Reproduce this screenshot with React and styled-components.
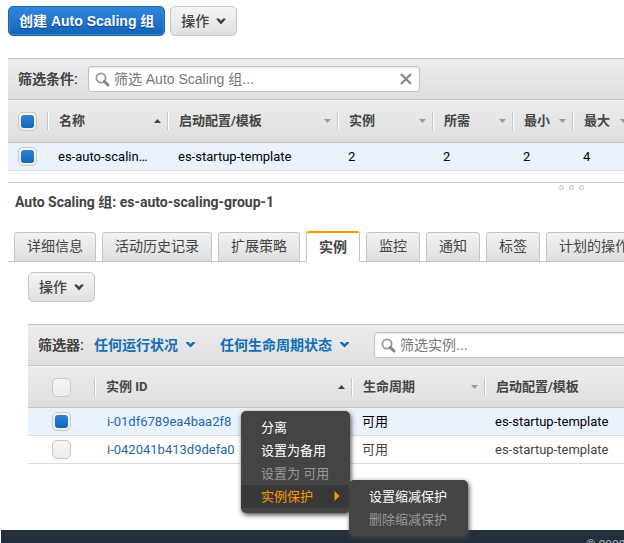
import React, { useState } from "react";
import styled, { createGlobalStyle, css } from "styled-components";

const sans = '"Liberation Sans", "Noto Sans CJK SC", sans-serif';
const roboto = 'Roboto, "Noto Sans CJK SC", sans-serif';

const GlobalStyle = createGlobalStyle`
  *, *::before, *::after { box-sizing: border-box; }
  html { overflow: hidden; }
  body { margin: 0; background: #fff; color: #444; font: 14px/20px ${sans}; }
  button, input, select { font: inherit; color: inherit; margin: 0; }
`;

const Page = styled.div`
  display: flex;
  flex-direction: column;
  height: 100vh;
  overflow: hidden;
`;

const Main = styled.main`
  flex: 1 0 auto;
  padding: 6px 0 0 8px;
`;

const Toolbar = styled.div`
  display: flex;
  gap: 5px;
`;

const Button = styled.button`
  display: inline-flex;
  align-items: center;
  gap: 7px;
  height: 30px;
  padding: 0 10px;
  border: 1px solid #c6c6c6;
  border-radius: 5px;
  background: linear-gradient(#f5f5f5, #e0e0e0);
  color: #444;
  font-weight: 500;
  white-space: nowrap;
  ${(p) =>
    p.$primary &&
    css`
      border-color: #1a63b0;
      background: linear-gradient(#2f88dc, #1263b8);
      box-shadow: inset 0 0 0 1px #3583d0;
      color: #fff;
      font-weight: 700;
      text-shadow: 0 1px 1px #0b4480;
    `}
`;

const Panel = styled.section`
  position: relative;
  margin: ${(p) => (p.$nested ? "22px 0 0 20px" : "22px 0 0")};
`;

const FilterBar = styled.div`
  display: flex;
  align-items: center;
  gap: ${(p) => p.$gap}px;
  height: 42px;
  padding: 0 10px;
  border: solid #c4c4c4;
  border-width: 1px 0;
  background: linear-gradient(#ededed, #dedede);
  white-space: nowrap;
`;

const FilterGroup = styled.div`
  display: flex;
  align-items: center;
  gap: 10px;
`;

const FilterLabel = styled.label`
  font-weight: 500;
  text-shadow: 0 0 0 #444;
`;

const SelectBox = styled.span`
  display: inline-flex;
  align-items: center;
  gap: 8px;
`;

const FilterSelect = styled.select`
  appearance: none;
  padding: 0;
  border: 0;
  background: transparent;
  color: #146eb4;
  font-weight: 700;
`;

const SearchBox = styled.div`
  display: flex;
  align-items: center;
  flex: 0 0 auto;
  gap: 4px;
  width: 332px;
  height: 26px;
  padding: 0 7px 0 6px;
  border: 1px solid #c4c4c4;
  border-radius: 3px;
  background: #fff;
  box-shadow: inset 0 1px 2px #e4e4e4;
`;

const SearchInput = styled.input`
  flex: 1;
  min-width: 0;
  padding: 0;
  border: 0;
  outline: 0;
  background: transparent;
  &::placeholder { color: #777; opacity: 1; }
`;

const ClearButton = styled.button`
  display: flex;
  padding: 0;
  border: 0;
  background: none;
`;

const Table = styled.table`
  width: 100%;
  min-width: 625px;
  table-layout: fixed;
  border-collapse: separate;
  border-spacing: 0;
  font: 13px/20px ${roboto};
`;

const Col = styled.col`
  width: ${(p) => (p.$width ? `${p.$width}px` : "auto")};
`;

const HeadRow = styled.tr`
  height: ${(p) => (p.$compact ? 42 : 43)}px;
  background: linear-gradient(#ececec, #dedede);
`;

const Th = styled.th`
  padding: 0;
  border-bottom: 1px solid #c4c4c4;
  box-shadow: inset 0 1px #f4f4f4;
  text-align: left;
`;

const SortButton = styled.button`
  display: flex;
  align-items: center;
  justify-content: space-between;
  width: 100%;
  height: 18px;
  padding: 0 6px 0 11px;
  border: 0;
  border-left: 1px solid #c4c4c4;
  background: none;
  box-shadow: inset 1px 0 #fff;
  color: #444;
  font-weight: 700;
  white-space: nowrap;
`;

const Tr = styled.tr`
  background: ${(p) => (p.$selected ? "#eaf2fe" : "#fff")};
  color: ${(p) => (p.$selected ? "#000" : "#444")};
`;

const Td = styled.td`
  height: 28px;
  padding: 0 14px 0 11px;
  border-bottom: 1px solid #dcdcdc;
  overflow: hidden;
  white-space: nowrap;
  text-overflow: ellipsis;
`;

const IdCell = styled(Td)`
  padding-left: 13px;
`;

const CheckCell = styled.td`
  height: 28px;
  padding: 0;
  border-bottom: 1px solid #dcdcdc;
  text-align: center;
  line-height: 16px;
`;

const CheckHead = styled(Th)`
  text-align: center;
`;

const Checkbox = styled.input`
  appearance: none;
  display: inline-grid;
  place-content: center;
  width: 19px;
  height: 19px;
  border: 1px solid #c8c8c8;
  border-radius: 5px;
  background: linear-gradient(#f6f6f6, #ececec);
  vertical-align: middle;
  &:checked::before {
    content: "";
    width: 13px;
    height: 13px;
    border-radius: 3px;
    background: linear-gradient(#2e84d8, #1465ba);
  }
`;

const InstanceLink = styled.a`
  color: #2467a8;
  text-decoration: none;
`;

const Splitter = styled.div`
  display: flex;
  justify-content: flex-end;
  gap: 5px;
  height: 10px;
  margin-top: 11px;
  padding: 2px 40px 0 0;
  border-top: 1px solid #c8c8c8;
`;

const Grip = styled.span`
  width: 5px;
  height: 5px;
  border: 1px solid #c0c0c0;
  border-radius: 50%;
  background: #f4f4f4;
`;

const Title = styled.h2`
  margin: 0 0 19px 7px;
  font: 700 14px/20px ${roboto};
  white-space: nowrap;
`;

const Tabs = styled.div`
  display: flex;
  align-items: flex-end;
  gap: 6px;
  height: 31px;
  padding-left: 6px;
  background: linear-gradient(#c4c4c4, #c4c4c4) bottom / 100% 1px no-repeat;
`;

const Tab = styled.button`
  flex: none;
  height: 30px;
  padding: 0 12px 2px;
  border: 1px solid #c4c4c4;
  border-radius: 3px 3px 0 0;
  background: linear-gradient(#f3f3f3, #dedede);
  ${(p) =>
    p.$active &&
    css`
      height: 31px;
      border-top: 2px solid #ff9900;
      border-bottom: 0;
      background: #fff;
      font-weight: 700;
    `}
`;

const TabBody = styled.div`
  padding: 10px 0 0 20px;
`;

const Menu = styled.ul`
  position: absolute;
  z-index: 2;
  left: 213px;
  top: 87px;
  width: 109px;
  margin: 0;
  padding: 5px 0;
  border-radius: 5px;
  background: #444;
  box-shadow: 1px 2px 5px #444;
  list-style: none;
  font: 13px/23px ${roboto};
`;

const SubMenu = styled(Menu)`
  left: 108px;
  top: -5px;
  width: 119px;
`;

const MenuItem = styled.li`
  position: relative;
  background: ${(p) => (p.$open ? "#383838" : "transparent")};
`;

const MenuButton = styled.button`
  display: flex;
  align-items: center;
  justify-content: space-between;
  width: 100%;
  height: 23px;
  padding: 0 10px 1px 20px;
  border: 0;
  background: none;
  color: ${(p) => (p.$open ? "#ff9900" : "#fff")};
  white-space: nowrap;
  &:disabled { color: #999; }
`;

const Footer = styled.footer`
  height: 13px;
  flex: none;
  margin-left: 1px;
  padding: 7px 0 0 585px;
  background: #232f3e;
  color: #aab7b8;
  font: 12px/16px ${roboto};
  white-space: nowrap;
`;

const Chevron = () => (
  <svg width="10" height="7" viewBox="0 0 10 7" aria-hidden="true">
    <path d="M0.5 0.5H3L5 2.8L7 0.5H9.5V1.5L5 6.5L0.5 1.5Z" fill="#444" />
  </svg>
);

const SmallChevron = () => (
  <svg width="9" height="6" viewBox="0 0 9 6" aria-hidden="true">
    <path d="M0 0H2.5L4.5 2L6.5 0H9V1L4.5 5.5L0 1Z" fill="#146eb4" />
  </svg>
);

const SearchIcon = () => (
  <svg width="15" height="15" viewBox="0 0 15 15" aria-hidden="true">
    <circle cx="6" cy="6" r="4.6" fill="none" stroke="#999" strokeWidth="1.8" />
    <path d="M9.3 9.3L13 13" stroke="#888" strokeWidth="3" strokeLinecap="round" />
  </svg>
);

const ClearIcon = () => (
  <svg width="12" height="12" viewBox="0 0 12 12" aria-hidden="true">
    <path d="M1 1L11 11M11 1L1 11" stroke="#888" strokeWidth="2.2" />
  </svg>
);

const SortIcon = ({ up }) => (
  <svg width="7" height="4" viewBox="0 0 7 4" aria-hidden="true">
    <path d={up ? "M0 4L3.5 0L7 4Z" : "M0 0L3.5 4L7 0Z"} fill={up ? "#444" : "#999"} />
  </svg>
);

const SubArrow = () => (
  <svg width="6" height="10" viewBox="0 0 6 10" aria-hidden="true">
    <path d="M0.5 0L5.5 5L0.5 10Z" fill="#ff9900" />
  </svg>
);

const HeaderCell = ({ children, up }) => (
  <Th scope="col">
    <SortButton type="button">
      {children}
      <SortIcon up={up} />
    </SortButton>
  </Th>
);

const tabs = ["详细信息", "活动历史记录", "扩展策略", "实例", "监控", "通知", "标签", "计划的操作"];

const groupColumns = ["名称", "启动配置/模板", "实例", "所需", "最小", "最大"];

const instances = [
  { id: "i-01df6789ea4baa2f8", selected: true },
  { id: "i-042041b413d9defa0", selected: false },
];

export default function App() {
  const [tab, setTab] = useState("实例");
  return (
    <Page>
      <GlobalStyle />
      <Main>
        <Toolbar>
          <Button type="button" $primary>创建 Auto Scaling 组</Button>
          <Button type="button">操作<Chevron /></Button>
        </Toolbar>

        <Panel>
          <FilterBar $gap={10}>
            <FilterLabel htmlFor="group-filter">筛选条件:</FilterLabel>
            <SearchBox>
              <SearchIcon />
              <SearchInput id="group-filter" placeholder="筛选 Auto Scaling 组..." />
              <ClearButton type="button" aria-label="清除"><ClearIcon /></ClearButton>
            </SearchBox>
          </FilterBar>
          <Table>
            <colgroup>
              {[39, 120, 170, 95, 80, 60, 0].map((w, i) => <Col key={i} $width={w} />)}
            </colgroup>
            <thead>
              <HeadRow>
                <CheckHead><Checkbox type="checkbox" defaultChecked aria-label="全选" /></CheckHead>
                {groupColumns.map((name, i) => <HeaderCell key={name} up={i === 0}>{name}</HeaderCell>)}
              </HeadRow>
            </thead>
            <tbody>
              <Tr $selected>
                <CheckCell><Checkbox type="checkbox" defaultChecked aria-label="es-auto-scaling-group-1" /></CheckCell>
                <Td>es-auto-scaling-group-1</Td>
                <Td>es-startup-template</Td>
                <Td>2</Td>
                <Td>2</Td>
                <Td>2</Td>
                <Td>4</Td>
              </Tr>
            </tbody>
          </Table>
        </Panel>

        <Splitter><Grip /><Grip /><Grip /></Splitter>
        <Title>Auto Scaling 组: es-auto-scaling-group-1</Title>

        <Tabs role="tablist">
          {tabs.map((name) => (
            <Tab key={name} type="button" role="tab" aria-selected={name === tab} $active={name === tab} onClick={() => setTab(name)}>
              {name}
            </Tab>
          ))}
        </Tabs>
        <TabBody>
          <Button type="button">操作<Chevron /></Button>
        </TabBody>

        <Panel $nested>
          <FilterBar $gap={25}>
            <FilterGroup>
              <FilterLabel htmlFor="health">筛选器:</FilterLabel>
              <SelectBox>
                <FilterSelect id="health"><option>任何运行状况</option></FilterSelect>
                <SmallChevron />
              </SelectBox>
            </FilterGroup>
            <SelectBox>
              <FilterSelect aria-label="生命周期状态"><option>任何生命周期状态</option></FilterSelect>
              <SmallChevron />
            </SelectBox>
            <SearchBox>
              <SearchIcon />
              <SearchInput aria-label="筛选实例" placeholder="筛选实例..." />
            </SearchBox>
          </FilterBar>
          <Table>
            <colgroup>
              {[66, 257, 133, 0].map((w, i) => <Col key={i} $width={w} />)}
            </colgroup>
            <thead>
              <HeadRow $compact>
                <CheckHead><Checkbox type="checkbox" aria-label="全选" /></CheckHead>
                <HeaderCell up>实例 ID</HeaderCell>
                <HeaderCell>生命周期</HeaderCell>
                <HeaderCell>启动配置/模板</HeaderCell>
              </HeadRow>
            </thead>
            <tbody>
              {instances.map(({ id, selected }) => (
                <Tr key={id} $selected={selected}>
                  <CheckCell><Checkbox type="checkbox" defaultChecked={selected} aria-label={id} /></CheckCell>
                  <IdCell><InstanceLink href="#">{id}</InstanceLink></IdCell>
                  <Td>可用</Td>
                  <Td>es-startup-template</Td>
                </Tr>
              ))}
            </tbody>
          </Table>
          <Menu>
            <MenuItem><MenuButton type="button">分离</MenuButton></MenuItem>
            <MenuItem><MenuButton type="button">设置为备用</MenuButton></MenuItem>
            <MenuItem><MenuButton type="button" disabled>设置为 可用</MenuButton></MenuItem>
            <MenuItem $open>
              <MenuButton type="button" $open>实例保护<SubArrow /></MenuButton>
              <SubMenu>
                <MenuItem><MenuButton type="button">设置缩减保护</MenuButton></MenuItem>
                <MenuItem><MenuButton type="button" disabled>删除缩减保护</MenuButton></MenuItem>
              </SubMenu>
            </MenuItem>
          </Menu>
        </Panel>
      </Main>
      <Footer>© 2008</Footer>
    </Page>
  );
}
